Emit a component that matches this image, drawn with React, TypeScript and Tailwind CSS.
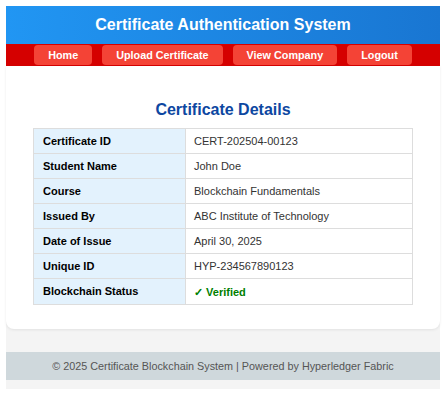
const rows: { label: string; value: string }[] = [
  { label: "Certificate ID", value: "CERT-202504-00123" },
  { label: "Student Name", value: "John Doe" },
  { label: "Course", value: "Blockchain Fundamentals" },
  { label: "Issued By", value: "ABC Institute of Technology" },
  { label: "Date of Issue", value: "April 30, 2025" },
  { label: "Unique ID", value: "HYP-234567890123" },
];

const links = ["Home", "Upload Certificate", "View Company", "Logout"];

export default function App() {
  return (
    <div className="w-[448px] h-[398px] bg-white pt-[6px] pl-[6px] font-['Liberation_Sans',Arial,sans-serif]">
      <div className="w-[434px] bg-[#f4f4f4] pb-[9px]">
        <header className="h-[38px] flex items-center justify-center bg-gradient-to-r from-[#2196f3] to-[#1976d2]">
          <h1 className="text-white text-[16px] font-bold leading-none">Certificate Authentication System</h1>
        </header>
        <nav className="h-[22px] bg-[#d50000] flex justify-center items-center gap-[10px]">
          {links.map((l) => (
            <a
              key={l}
              className="h-[20px] flex items-center px-[14px] rounded-[4px] bg-[#f44336] text-white text-[10.8px] font-bold"
            >
              {l}
            </a>
          ))}
        </nav>
        <main className="bg-white rounded-b-[8px] shadow-[0_1px_3px_rgba(0,0,0,0.08)] px-[27px] pt-[34px] pb-[24px]">
          <h2 className="text-center text-[#0d47a1] text-[16px] font-bold leading-[19px] mb-[9px]">
            Certificate Details
          </h2>
          <table className="w-full border-collapse text-[11px]">
            <tbody>
              {rows.map((r) => (
                <tr key={r.label} className="h-[25px]">
                  <td className="w-[152px] bg-[#e3f2fd] border border-[#ddd] pl-[9px] font-bold text-black">{r.label}</td>
                  <td className="border border-[#ddd] pl-[8px] text-[#333]">{r.value}</td>
                </tr>
              ))}
              <tr className="h-[26px]">
                <td className="bg-[#e3f2fd] border border-[#ddd] pl-[9px] font-bold text-black">Blockchain Status</td>
                <td className="border border-[#ddd] pl-[8px] pt-[2px] font-bold text-[#008000]">✓ Verified</td>
              </tr>
            </tbody>
          </table>
        </main>
        <footer className="mt-[23px] h-[28px] bg-[#cfd8dc] flex items-center justify-center text-[10.8px] text-[#555]">
          © 2025 Certificate Blockchain System | Powered by Hyperledger Fabric
        </footer>
      </div>
    </div>
  );
}
